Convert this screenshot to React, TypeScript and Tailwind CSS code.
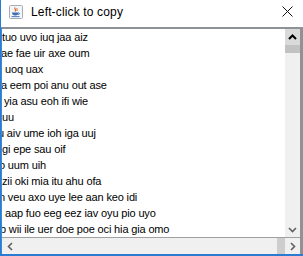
const lines: { text: string; offset: string }[] = [
  { text: "tuo uvo iuq jaa aiz", offset: "ml-0" },
  { text: "ae fae uir axe oum", offset: "ml-[-1px]" },
  { text: "uoq uax", offset: "ml-[3px]" },
  { text: "a eem poi anu out ase", offset: "ml-[-1px]" },
  { text: "yia asu eoh ifi wie", offset: "ml-[2px]" },
  { text: "uu", offset: "ml-0" },
  { text: "u aiv ume ioh iga uuj", offset: "ml-[-4px]" },
  { text: "gi epe sau oif", offset: "ml-0" },
  { text: "o uum uih", offset: "ml-[-3px]" },
  { text: "zii oki mia itu ahu ofa", offset: "ml-0" },
  { text: "n veu axo uye lee aan keo idi", offset: "ml-[-3px]" },
  { text: "aap fuo eeg eez iav oyu pio uyo", offset: "ml-[3px]" },
  { text: "b wii ile uer doe poe oci hia gia omo", offset: "ml-[-2px]" },
];

export default function App() {
  return (
    <div className="flex h-[256px] w-[303px] flex-col overflow-hidden border-l border-b-2 border-[#2b7bd3] bg-white font-['Liberation_Sans',Arial,sans-serif] text-black">
      <TitleBar />
      <div className="flex min-h-0 flex-1 flex-col border-t-2 border-r-[3px] border-[#8e9196] border-l border-l-[#3d8ad6]">
        <div className="flex min-h-0 flex-1">
          <div className="min-w-0 flex-1 overflow-hidden whitespace-nowrap text-[11px] leading-[16px] tracking-[-0.15px]">
            {lines.map((line) => (
              <div key={line.text} className={line.offset}>
                {line.text}
              </div>
            ))}
          </div>
          <VerticalScrollbar />
        </div>
        <div className="h-px shrink-0 bg-[#a0a0a0]" />
        <HorizontalScrollbar />
      </div>
    </div>
  );
}

function TitleBar() {
  return (
    <div className="flex h-[27px] shrink-0 items-start">
      <div className="flex h-[23px] w-full items-center">
        <JavaIcon />
        <span className="ml-[8px] text-[12px] tracking-[0.15px]">Left-click to copy</span>
        <svg className="ml-auto mr-[10px]" width="11" height="11" viewBox="0 0 11 11">
          <path d="M0.5 0.5 L10.5 10.5 M10.5 0.5 L0.5 10.5" stroke="#111" strokeWidth="1" />
        </svg>
      </div>
    </div>
  );
}

function JavaIcon() {
  return (
    <svg className="ml-[8px]" width="14" height="14" viewBox="0 0 14 14">
      <rect x="0.5" y="0.5" width="13" height="13" rx="1" fill="#f3f5f8" stroke="#a9adb3" />
      <path d="M6 2.5 C5 4 7.5 4.5 6.3 6.5" stroke="#e0631f" strokeWidth="1.2" fill="none" />
      <path d="M8 3 C7.3 4 8.8 4.6 7.9 6" stroke="#e0631f" strokeWidth="1" fill="none" />
      <path d="M3 7.5 H9.5 C9.5 9.5 8.3 10.5 6.3 10.5 C4.3 10.5 3 9.5 3 7.5 Z" fill="#3b6fb4" />
      <path d="M9.3 8 C11 7.8 11 9.6 9 9.6" stroke="#3b6fb4" strokeWidth="0.9" fill="none" />
      <path d="M2.5 11.6 H10.5" stroke="#3b6fb4" strokeWidth="0.9" />
    </svg>
  );
}

function Chevron({ dir, dark }: { dir: "up" | "down" | "left" | "right"; dark?: boolean }) {
  const paths = {
    up: "M1 6 L4.5 2.5 L8 6",
    down: "M1 3 L4.5 6.5 L8 3",
    left: "M6 1 L2.5 4.5 L6 8",
    right: "M3 1 L6.5 4.5 L3 8",
  };
  return (
    <svg width="9" height="9" viewBox="0 0 9 9">
      <path
        d={paths[dir]}
        stroke={dark ? "#000" : "#606060"}
        strokeWidth={dark ? 2 : 1.6}
        fill="none"
      />
    </svg>
  );
}

function VerticalScrollbar() {
  return (
    <div className="flex w-[15px] shrink-0 flex-col bg-[#f0f0f0]">
      <div className="flex h-[16px] items-center justify-center bg-[#dadada]">
        <Chevron dir="up" dark />
      </div>
      <div className="h-[8px] bg-[#c2c2c2]" />
      <div className="flex-1" />
      <div className="flex h-[16px] items-center justify-center">
        <Chevron dir="down" />
      </div>
    </div>
  );
}

function HorizontalScrollbar() {
  return (
    <div className="flex h-[16px] shrink-0 bg-[#f0f0f0]">
      <div className="flex w-[16px] items-center justify-center">
        <Chevron dir="left" />
      </div>
      <div className="flex-1" />
      <div className="w-[8px] bg-[#cdcdcd]" />
      <div className="flex w-[15px] items-center justify-center">
        <Chevron dir="right" />
      </div>
    </div>
  );
}
